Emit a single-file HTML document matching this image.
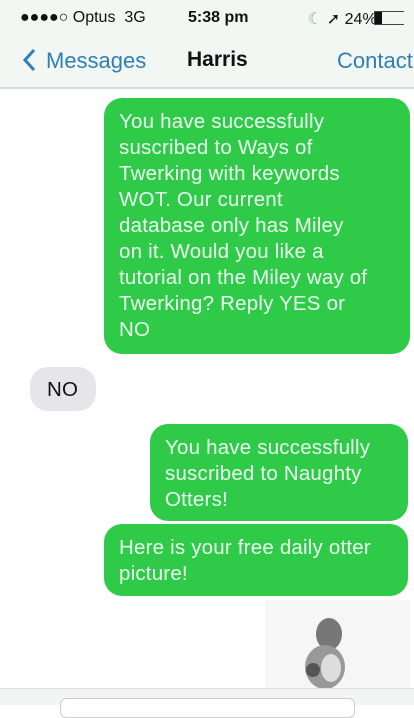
<!DOCTYPE html>
<html><head><style>
*{margin:0;padding:0;box-sizing:border-box}
body{width:414px;height:705px;overflow:hidden;background:#fff;font-family:"Liberation Sans",sans-serif;position:relative}
.top{position:absolute;left:0;top:0;width:414px;height:89px;background:#f3f7f4;border-bottom:2px solid #d8dcd9}
.t{position:absolute;white-space:nowrap}
.b{position:absolute;background:#2fcb48;color:#eafff0;font-size:20.5px;line-height:26px;border-radius:18px;padding:11px 0 0 15px;white-space:nowrap;letter-spacing:0.2px}
</style></head><body>
<div class="top">
<div class="t" style="left:20px;top:9px;font-size:16px;color:#111">●●●●○ Optus &nbsp;3G</div>
<div class="t" style="left:188px;top:9px;font-size:16px;color:#111;font-weight:bold">5:38 pm</div>
<div class="t" style="left:308px;top:9px;font-size:16px;color:#111"><span style="color:#8a8">☾</span> ➚ 24%</div>
<div style="position:absolute;left:374px;top:11px;width:30px;height:14px;border:1.5px solid #444;border-right:none"><div style="width:7px;height:100%;background:#111"></div></div>
<svg class="t" style="left:22px;top:48px" width="14" height="24"><path d="M12 2 L3 12 L12 22" stroke="#2f7fb5" stroke-width="3" fill="none"/></svg>
<div class="t" style="left:46px;top:48px;font-size:22px;color:#2f7fb5">Messages</div>
<div class="t" style="left:187px;top:48px;font-size:21px;color:#111;font-weight:bold">Harris</div>
<div class="t" style="left:337px;top:48px;font-size:22px;color:#2f7fb5">Contact</div>
</div>
<div class="b" style="left:104px;top:98px;width:306px;height:256px">You have successfully<br>suscribed to Ways of<br>Twerking with keywords<br>WOT. Our current<br>database only has Miley<br>on it. Would you like a<br>tutorial on the Miley way of<br>Twerking? Reply YES or<br>NO</div>
<div class="b" style="left:30px;top:367px;width:66px;height:44px;background:#e6e6ea;color:#111;padding:10px 0 0 17px">NO</div>
<div class="b" style="left:150px;top:424px;width:258px;height:97px">You have successfully<br>suscribed to Naughty<br>Otters!</div>
<div class="b" style="left:104px;top:524px;width:304px;height:72px">Here is your free daily otter<br>picture!</div>
<div style="position:absolute;left:265px;top:600px;width:145px;height:88px;background:#f6f6f6"></div>
<svg style="position:absolute;left:295px;top:612px" width="60" height="76"><ellipse cx="34" cy="22" rx="13" ry="16" fill="#777"/><ellipse cx="30" cy="55" rx="20" ry="22" fill="#999"/><ellipse cx="36" cy="56" rx="10" ry="14" fill="#ddd"/><circle cx="18" cy="58" r="7" fill="#555"/></svg>
<div style="position:absolute;left:0;top:688px;width:414px;height:17px;background:#f3f4f4;border-top:1px solid #ddd"></div>
<div style="position:absolute;left:60px;top:698px;width:295px;height:20px;border:1px solid #ccc;border-radius:6px;background:#fff"></div>
</body></html>
